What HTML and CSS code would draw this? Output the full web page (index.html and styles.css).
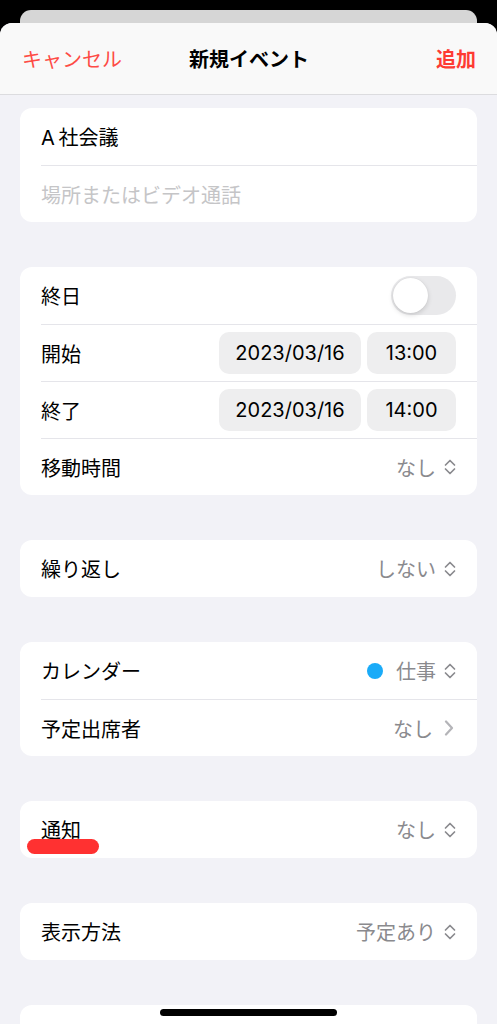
FILE: index.html
```html
<!DOCTYPE html>
<html lang="ja">
<head>
    <meta charset="UTF-8">
    <meta name="viewport" content="width=device-width, initial-scale=1.0">
    <title>新規イベント</title>
    <link rel="stylesheet" href="styles.css">
</head>
<body>
    <div class="back-sheet"></div>

    <div class="sheet">
        <header class="nav">
            <span class="nav-cancel">キャンセル</span>
            <h1 class="nav-title">新規イベント</h1>
            <span class="nav-add">追加</span>
        </header>

        <main class="content">
            <section class="group">
                <div class="row"><span class="label">A&thinsp;社会議</span></div>
                <div class="row"><span class="label placeholder">場所またはビデオ通話</span></div>
            </section>

            <section class="group">
                <div class="row">
                    <span class="label">終日</span>
                    <span class="toggle"><span class="knob"></span></span>
                </div>
                <div class="row">
                    <span class="label">開始</span>
                    <span class="pills">
                        <span class="pill pill-date">2023/03/16</span>
                        <span class="pill pill-time">13:00</span>
                    </span>
                </div>
                <div class="row">
                    <span class="label">終了</span>
                    <span class="pills">
                        <span class="pill pill-date">2023/03/16</span>
                        <span class="pill pill-time">14:00</span>
                    </span>
                </div>
                <div class="row">
                    <span class="label">移動時間</span>
                    <span class="value">なし
                        <svg class="updown" viewBox="0 0 12 16"><path d="M1.5 6 L6 1.5 L10.5 6 M1.5 10 L6 14.5 L10.5 10"/></svg>
                    </span>
                </div>
            </section>

            <section class="group">
                <div class="row">
                    <span class="label">繰り返し</span>
                    <span class="value">しない
                        <svg class="updown" viewBox="0 0 12 16"><path d="M1.5 6 L6 1.5 L10.5 6 M1.5 10 L6 14.5 L10.5 10"/></svg>
                    </span>
                </div>
            </section>

            <section class="group">
                <div class="row">
                    <span class="label">カレンダー</span>
                    <span class="value"><span class="cal-dot"></span>仕事
                        <svg class="updown" viewBox="0 0 12 16"><path d="M1.5 6 L6 1.5 L10.5 6 M1.5 10 L6 14.5 L10.5 10"/></svg>
                    </span>
                </div>
                <div class="row">
                    <span class="label">予定出席者</span>
                    <span class="value">なし
                        <svg class="chevron" viewBox="0 0 10 16"><path d="M2 1.5 L8 8 L2 14.5"/></svg>
                    </span>
                </div>
            </section>

            <section class="group">
                <div class="row">
                    <span class="label">通知</span>
                    <span class="value">なし
                        <svg class="updown" viewBox="0 0 12 16"><path d="M1.5 6 L6 1.5 L10.5 6 M1.5 10 L6 14.5 L10.5 10"/></svg>
                    </span>
                </div>
                <span class="marker"></span>
            </section>

            <section class="group">
                <div class="row">
                    <span class="label">表示方法</span>
                    <span class="value">予定あり
                        <svg class="updown" viewBox="0 0 12 16"><path d="M1.5 6 L6 1.5 L10.5 6 M1.5 10 L6 14.5 L10.5 10"/></svg>
                    </span>
                </div>
            </section>

            <section class="group">
                <div class="row"><span class="label">添付ファイルを追加...</span></div>
            </section>
        </main>
    </div>

    <div class="home-indicator"></div>
</body>
</html>
```

FILE: styles.css
```css
/* Global */
* {
    margin: 0;
    padding: 0;
    box-sizing: border-box;
}

body {
    background-color: #000;
    font-family: "Inter", "Noto Sans CJK JP", sans-serif;
    color: #000;
    height: 1024px;
    overflow: hidden;
}

.back-sheet {
    margin: 10px 20px 0;
    height: 13px;
    background-color: #d6d6d6;
    border-radius: 11px 11px 0 0;
}

.sheet {
    background-color: #f2f2f7;
    border-radius: 12px 12px 0 0;
    height: 1001px;
    overflow: hidden;
}

/* Nav bar */
.nav {
    height: 72px;
    background-color: #f9f9f9;
    border-bottom: 1px solid #dcdcdf;
    display: grid;
    grid-template-columns: 1fr auto 1fr;
    align-items: center;
    padding: 0 21px 0 22px;
    font-size: 20px;
}

.nav-cancel {
    color: #fe4b45;
}

.nav-title {
    font-size: 20px;
    font-weight: 700;
}

.nav-add {
    color: #fe3b33;
    font-weight: 700;
    justify-self: end;
}

/* Groups */
.content {
    display: flex;
    flex-direction: column;
    gap: 45px;
    padding: 13px 20px 0;
}

.group {
    background-color: #fff;
    border-radius: 12px;
    position: relative;
}

.row {
    height: 57px;
    display: flex;
    align-items: center;
    justify-content: space-between;
    margin-left: 21px;
    padding-right: 21px;
    font-size: 20px;
}

.row + .row {
    border-top: 1px solid #e5e5ea;
}

.label {
    white-space: nowrap;
}

.placeholder {
    color: #c5c5c7;
}

.value {
    display: flex;
    align-items: center;
    color: #8a8a8e;
}

.updown {
    width: 12px;
    height: 16px;
    margin-left: 8px;
    fill: none;
    stroke: #8a8a8e;
    stroke-width: 1.7;
    stroke-linecap: round;
    stroke-linejoin: round;
}

.chevron {
    width: 10px;
    height: 16px;
    margin-left: 11px;
    margin-right: 2px;
    fill: none;
    stroke: #b4b4b8;
    stroke-width: 2.2;
    stroke-linecap: round;
    stroke-linejoin: round;
}

.cal-dot {
    width: 16px;
    height: 16px;
    border-radius: 50%;
    background-color: #1aabf8;
    margin-right: 13px;
}

/* Toggle */
.toggle {
    width: 65px;
    height: 39px;
    border-radius: 20px;
    background-color: #e9e9eb;
    padding: 2px;
    display: flex;
}

.knob {
    width: 35px;
    height: 35px;
    border-radius: 50%;
    background-color: #fff;
    box-shadow: 0 2px 5px rgba(0, 0, 0, 0.15), 0 0 1px rgba(0, 0, 0, 0.1);
}

/* Date and time pills */
.pills {
    display: flex;
    gap: 6px;
}

.pill {
    height: 42px;
    border-radius: 10px;
    background-color: #eeeeef;
    display: flex;
    align-items: center;
    justify-content: center;
    font-size: 20px;
}

.pill-date {
    width: 142px;
}

.pill-time {
    width: 89px;
}

/* Red highlight */
.marker {
    position: absolute;
    left: 7px;
    top: 38px;
    width: 72px;
    height: 15px;
    border-radius: 8px;
    background-color: #ff3131;
}

.home-indicator {
    position: fixed;
    left: 160px;
    bottom: 8px;
    width: 177px;
    height: 7px;
    border-radius: 4px;
    background-color: #000;
}
```
